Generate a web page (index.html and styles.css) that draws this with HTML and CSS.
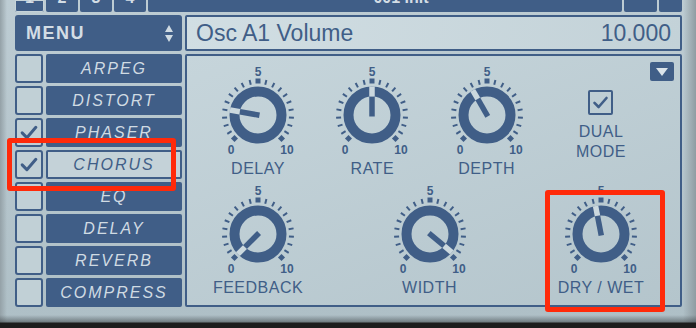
FILE: index.html
```html
<!DOCTYPE html>
<html lang="en">
<head>
    <meta charset="UTF-8">
    <title>Chorus FX</title>
    <link rel="stylesheet" href="styles.css">
</head>
<body>
    <!-- shared dial: ticks, markers and scale numbers -->
    <svg class="defs" width="0" height="0">
        <symbol id="dial" viewBox="-50 -50 100 92" overflow="visible">
            <g stroke="#405e87" stroke-width="2">
                <line x1="0" y1="-31" x2="0" y2="-36" transform="rotate(-121.5)"/>
                <line x1="0" y1="-31" x2="0" y2="-36" transform="rotate(-108)"/>
                <line x1="0" y1="-31" x2="0" y2="-36" transform="rotate(-94.5)"/>
                <line x1="0" y1="-31" x2="0" y2="-36" transform="rotate(-81)"/>
                <line x1="0" y1="-31" x2="0" y2="-36" transform="rotate(-67.5)"/>
                <line x1="0" y1="-31" x2="0" y2="-36" transform="rotate(-54)"/>
                <line x1="0" y1="-31" x2="0" y2="-36" transform="rotate(-40.5)"/>
                <line x1="0" y1="-31" x2="0" y2="-36" transform="rotate(-27)"/>
                <line x1="0" y1="-31" x2="0" y2="-36" transform="rotate(-13.5)"/>
                <line x1="0" y1="-31" x2="0" y2="-36" transform="rotate(13.5)"/>
                <line x1="0" y1="-31" x2="0" y2="-36" transform="rotate(27)"/>
                <line x1="0" y1="-31" x2="0" y2="-36" transform="rotate(40.5)"/>
                <line x1="0" y1="-31" x2="0" y2="-36" transform="rotate(54)"/>
                <line x1="0" y1="-31" x2="0" y2="-36" transform="rotate(67.5)"/>
                <line x1="0" y1="-31" x2="0" y2="-36" transform="rotate(81)"/>
                <line x1="0" y1="-31" x2="0" y2="-36" transform="rotate(94.5)"/>
                <line x1="0" y1="-31" x2="0" y2="-36" transform="rotate(108)"/>
                <line x1="0" y1="-31" x2="0" y2="-36" transform="rotate(121.5)"/>
            </g>
            <g fill="#405e87">
                <rect x="-2.5" y="-36.5" width="5" height="5"/>
                <rect x="-2.5" y="-2.5" width="5" height="5" transform="translate(-23.5 23.5) rotate(45)"/>
                <rect x="-2.5" y="-2.5" width="5" height="5" transform="translate(23.5 23.5) rotate(45)"/>
                <text class="num" x="0" y="-43">5</text>
                <text class="num" x="-27" y="35">0</text>
                <text class="num" x="29" y="35">10</text>
            </g>
            <circle r="23.5" fill="none" stroke="#405e87" stroke-width="10"/>
        </symbol>
        <symbol id="tick" viewBox="0 0 28 28">
            <path d="M6 14.5 L11.5 20 L22 8" fill="none" stroke="#405e87" stroke-width="3.5" stroke-linecap="round" stroke-linejoin="round"/>
        </symbol>
    </svg>

    <div class="app">
        <!-- top strip -->
        <div class="topbar">
            <div class="tab active"><span>1</span></div>
            <div class="tab"><span>2</span></div>
            <div class="tab"><span>3</span></div>
            <div class="tab"><span>4</span></div>
            <div class="title"><span>001 Init</span></div>
            <div class="arrow wide"></div>
            <div class="arrow"></div>
        </div>

        <!-- menu head + parameter display -->
        <div class="menu-head">
            <span>MENU</span>
            <svg width="8" height="17" viewBox="0 0 8 17">
                <path d="M4 0 L8 7 L0 7 Z M4 17 L8 10 L0 10 Z" fill="#cfdae2"/>
            </svg>
        </div>
        <div class="display">
            <span>Osc A1 Volume</span>
            <span>10.000</span>
        </div>

        <!-- effects list -->
        <div class="fx-list">
            <div class="fx"><div class="check"></div><div class="fx-name">ARPEG</div></div>
            <div class="fx"><div class="check"></div><div class="fx-name">DISTORT</div></div>
            <div class="fx"><div class="check"><svg><use href="#tick"/></svg></div><div class="fx-name">PHASER</div></div>
            <div class="fx"><div class="check"><svg><use href="#tick"/></svg></div><div class="fx-name current">CHORUS</div></div>
            <div class="fx"><div class="check"></div><div class="fx-name">EQ</div></div>
            <div class="fx"><div class="check"></div><div class="fx-name">DELAY</div></div>
            <div class="fx"><div class="check"></div><div class="fx-name">REVERB</div></div>
            <div class="fx"><div class="check"></div><div class="fx-name">COMPRESS</div></div>
        </div>

        <!-- chorus panel -->
        <div class="panel">
            <div class="dropdown">
                <svg width="12" height="8" viewBox="0 0 12 8"><path d="M0 0 H12 L6 8 Z" fill="#dbe4ea"/></svg>
            </div>

            <div class="row top">
                <div class="knob">
                    <svg viewBox="-50 -50 100 92" width="100" height="92">
                        <use href="#dial" x="-50" y="-50" width="100" height="92"/>
                        <g transform="rotate(-80)"><rect class="ptr" x="-2.75" y="-18.5" width="5.5" height="20"/><rect class="ptr-lit" x="-2.75" y="-28.5" width="5.5" height="10"/></g>
                    </svg>
                    <div class="label">DELAY</div>
                </div>
                <div class="knob">
                    <svg viewBox="-50 -50 100 92" width="100" height="92">
                        <use href="#dial" x="-50" y="-50" width="100" height="92"/>
                        <g><rect class="ptr" x="-2.75" y="-18.5" width="5.5" height="20"/><rect class="ptr-lit" x="-2.75" y="-28.5" width="5.5" height="10"/></g>
                    </svg>
                    <div class="label">RATE</div>
                </div>
                <div class="knob">
                    <svg viewBox="-50 -50 100 92" width="100" height="92">
                        <use href="#dial" x="-50" y="-50" width="100" height="92"/>
                        <g transform="rotate(-30)"><rect class="ptr" x="-2.75" y="-18.5" width="5.5" height="20"/><rect class="ptr-lit" x="-2.75" y="-28.5" width="5.5" height="10"/></g>
                    </svg>
                    <div class="label">DEPTH</div>
                </div>
                <div class="toggle">
                    <div class="box"><svg><use href="#tick"/></svg></div>
                    <div class="label">DUAL<br>MODE</div>
                </div>
            </div>

            <div class="row">
                <div class="knob">
                    <svg viewBox="-50 -50 100 92" width="100" height="92">
                        <use href="#dial" x="-50" y="-50" width="100" height="92"/>
                        <g transform="rotate(-135)"><rect class="ptr" x="-2.75" y="-18.5" width="5.5" height="20"/><rect class="ptr-lit" x="-2.75" y="-28.5" width="5.5" height="10"/></g>
                    </svg>
                    <div class="label">FEEDBACK</div>
                </div>
                <div class="knob">
                    <svg viewBox="-50 -50 100 92" width="100" height="92">
                        <use href="#dial" x="-50" y="-50" width="100" height="92"/>
                        <g transform="rotate(130)"><rect class="ptr" x="-2.75" y="-18.5" width="5.5" height="20"/><rect class="ptr-lit" x="-2.75" y="-28.5" width="5.5" height="10"/></g>
                    </svg>
                    <div class="label">WIDTH</div>
                </div>
                <div class="knob">
                    <svg viewBox="-50 -50 100 92" width="100" height="92">
                        <use href="#dial" x="-50" y="-50" width="100" height="92"/>
                        <g transform="rotate(-11)"><rect class="ptr" x="-2.75" y="-18.5" width="5.5" height="20"/><rect class="ptr-lit" x="-2.75" y="-28.5" width="5.5" height="10"/></g>
                    </svg>
                    <div class="label">DRY / WET</div>
                </div>
            </div>
        </div>
    </div>

    <!-- annotation boxes -->
    <div class="mark mark-chorus"></div>
    <div class="mark mark-drywet"></div>
</body>
</html>
```

FILE: styles.css
```css
/* base */
body {
    margin: 0;
    width: 696px;
    height: 328px;
    overflow: hidden;
    position: relative;
    font-family: "Liberation Sans", Arial, sans-serif;
    color: #405e87;
    background:
        linear-gradient(to bottom, transparent 315px, rgba(40, 45, 48, 0.45) 322px, #1d1d1d 323px),
        linear-gradient(to right, transparent 683px, #8f9ca2 696px),
        linear-gradient(to right, #94a1a7 0, transparent 7px),
        linear-gradient(#bdccd3, #aebfc6);
}

.defs {
    position: absolute;
}

.num {
    font-family: "Liberation Sans", Arial, sans-serif;
    font-weight: bold;
    font-size: 12px;
    text-anchor: middle;
    dominant-baseline: central;
}

.app {
    display: grid;
    grid-template-columns: 167px 497px;
    grid-template-rows: 12px 36px 253px;
    gap: 3px;
    padding-left: 15px;
}

/* top strip, scrolled mostly out of view */
.topbar {
    grid-column: 1 / -1;
    display: flex;
    gap: 2px;
}

.tab, .title, .arrow {
    background: #405e87;
    overflow: hidden;
    color: #d3dde5;
    font-weight: bold;
    font-size: 16px;
    text-align: center;
    border-radius: 0 0 2px 2px;
}

.tab span, .title span {
    display: block;
    line-height: 12px;
    margin-top: -8px;
}

.tab {
    width: 32px;
}

.tab.active {
    width: 29px;
    box-shadow: inset 0 0 0 1px #c6d3d9;
}

.title {
    flex: 1;
    padding-left: 32px;
}

.arrow {
    width: 23px;
}

.arrow.wide {
    width: 33px;
}

/* menu head + display */
.menu-head {
    background: #405e87;
    border-radius: 3px;
    display: flex;
    align-items: center;
    justify-content: space-between;
    padding: 0 9px 0 11px;
    color: #d3dde5;
    font-weight: bold;
    font-size: 18px;
    letter-spacing: 1.5px;
}

.display {
    border: 2px solid #405e87;
    border-radius: 2px;
    background: linear-gradient(100deg, #d1dee3, #c3d2d8);
    display: flex;
    justify-content: space-between;
    align-items: center;
    padding: 0 9px 0 9px;
    font-size: 23px;
}

/* effects list */
.fx-list {
    display: flex;
    flex-direction: column;
    gap: 3px;
}

.fx {
    height: 29px;
    display: grid;
    grid-template-columns: 28px 1fr;
    gap: 3px;
}

.check {
    border: 2px solid #405e87;
    border-radius: 3px;
    background: #c1d0d6;
}

.check svg {
    display: block;
    width: 24px;
    height: 25px;
}

.fx-name {
    background: #405e87;
    border-radius: 2px;
    color: #d0dbe3;
    font-style: italic;
    font-size: 16px;
    letter-spacing: 2px;
    display: flex;
    align-items: center;
    justify-content: center;
}

.fx-name.current {
    background: #c4d2d8;
    color: #405e87;
    box-shadow: inset 0 0 0 2px #405e87;
}

/* panel */
.panel {
    position: relative;
    border: 2px solid #405e87;
    border-radius: 2px;
    background: linear-gradient(160deg, #c6d5db, #b4c5cc);
    display: flex;
    flex-direction: column;
    gap: 6px;
    padding: 9px 29px 0 21px;
}

.dropdown {
    position: absolute;
    top: 6px;
    right: 6px;
    width: 24px;
    height: 19px;
    background: #405e87;
    border-radius: 2px;
    display: flex;
    align-items: center;
    justify-content: center;
}

.row {
    display: flex;
    justify-content: space-between;
}

.knob, .toggle {
    width: 100px;
    display: flex;
    flex-direction: column;
    align-items: center;
}

.knob svg {
    display: block;
    overflow: visible;
}

.ptr {
    fill: #405e87;
}

.ptr-lit {
    fill: #cbd8de;
}

.label {
    margin-top: 3px;
    font-size: 16px;
    line-height: 18px;
    letter-spacing: 0.5px;
    text-align: center;
}

.toggle .box {
    margin-top: 25px;
    width: 21px;
    height: 21px;
    border: 2px solid #405e87;
    border-radius: 2px;
}

.toggle .box svg {
    display: block;
    width: 21px;
    height: 21px;
}

.toggle .label {
    margin-top: 7px;
    line-height: 20px;
}

/* annotation boxes */
.mark {
    position: absolute;
    border: 5px solid #ff2a0a;
    border-radius: 3px;
}

.mark-chorus {
    left: 7px;
    top: 138px;
    width: 159px;
    height: 43px;
}

.mark-drywet {
    left: 545px;
    top: 190px;
    width: 110px;
    height: 112px;
}
```
